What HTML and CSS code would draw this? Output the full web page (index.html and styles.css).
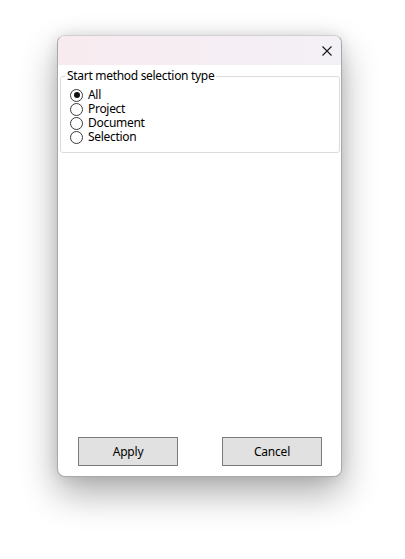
FILE: index.html
```html
<!DOCTYPE html>
<html>
<head>
<meta charset="utf-8">
<link rel="stylesheet" href="styles.css">
</head>
<body>
<div class="window">
  <div class="titlebar">
    <svg class="close" width="10" height="10" viewBox="0 0 10 10"><path d="M0.5 0.5 L9.5 9.5 M9.5 0.5 L0.5 9.5" stroke="#1a1a1a" stroke-width="1.1" fill="none"/></svg>
  </div>
  <fieldset class="group">
    <legend class="legend">Start method selection type</legend>
    <div class="options">
      <div class="opt"><span class="radio checked"></span><span class="label">All</span></div>
      <div class="opt"><span class="radio"></span><span class="label">Project</span></div>
      <div class="opt"><span class="radio"></span><span class="label">Document</span></div>
      <div class="opt"><span class="radio"></span><span class="label">Selection</span></div>
    </div>
  </fieldset>
  <div class="footer">
    <button class="btn">Apply</button>
    <button class="btn">Cancel</button>
  </div>
</div>
</body>
</html>
```
FILE: styles.css
```css
html, body {
  margin: 0;
  padding: 0;
  background: #ffffff;
}
body {
  width: 405px;
  height: 559px;
  overflow: hidden;
  font-family: "Noto Sans", "Open Sans", sans-serif;
  font-size: 12px;
  letter-spacing: -0.3px;
  color: #000;
  padding-top: 35px;
  padding-left: 57px;
  box-sizing: border-box;
}
.window {
  width: 285px;
  height: 442px;
  box-sizing: border-box;
  border: 1px solid #a8a8a8;
  border-top-color: #cfcfcf;
  border-radius: 8px;
  background: #fff;
  box-shadow: 0 16px 36px rgba(0,0,0,0.33), 0 0 14px rgba(0,0,0,0.10);
  display: flex;
  flex-direction: column;
  overflow: hidden;
}
.titlebar {
  height: 29px;
  flex: none;
  background: linear-gradient(to right, #f8ebf0, #f3f0f6);
  display: flex;
  justify-content: flex-end;
  align-items: center;
  padding-right: 9px;
  padding-top: 1px;
  box-sizing: border-box;
}
.close { display: block; }
.group {
  margin: 3px 1px 0 2px;
  border: 1px solid #dcdcdc;
  border-radius: 3px;
  padding: 0 4px 8px 4px;
  min-width: 0;
}
.legend {
  padding: 0 2px;
  line-height: 16px;
  height: 16px;
  font-size: 12px;
}
.options {
  padding-left: 5px;
  padding-top: 4px;
  display: flex;
  flex-direction: column;
}
.opt {
  display: flex;
  align-items: center;
  height: 14px;
  overflow: visible;
}
.label {
  line-height: 14px;
  height: 14px;
  display: block;
}
.radio {
  width: 11px;
  height: 11px;
  border: 1px solid #3a3a3a;
  border-radius: 50%;
  box-sizing: content-box;
  margin-right: 5px;
  position: relative;
  flex: none;
  background: #fff;
}
.radio.checked::after {
  content: "";
  position: absolute;
  left: 2.5px;
  top: 2.5px;
  width: 6px;
  height: 6px;
  border-radius: 50%;
  background: #111;
}
.footer {
  margin-top: auto;
  display: flex;
  justify-content: space-between;
  padding: 0 19px 10px 20px;
}
.btn {
  width: 100px;
  height: 29px;
  box-sizing: border-box;
  background: #e1e1e1;
  border: 1px solid #7a7a7a;
  border-radius: 0;
  font-family: "Noto Sans", "Open Sans", sans-serif;
  font-size: 12px;
  letter-spacing: -0.2px;
  color: #000;
  padding: 0 0 1px 0;
}
```
